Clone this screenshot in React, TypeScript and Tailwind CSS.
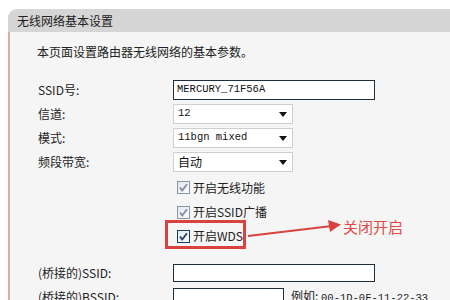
import React from 'react';

const cjk = { fontFamily: '"Noto Sans CJK SC", "Noto Sans", sans-serif' };
const mono = { fontFamily: '"Liberation Mono", "Noto Sans CJK SC", monospace' };

function Checkbox({ strong }: { strong?: boolean }) {
  return (
    <svg width="13" height="13" viewBox="0 0 13 13" className="shrink-0">
      <defs>
        <linearGradient id={strong ? 'cbs' : 'cbw'} x1="0" y1="0" x2="1" y2="1">
          <stop offset="0" stopColor="#dfe6ee" />
          <stop offset="1" stopColor="#ffffff" />
        </linearGradient>
      </defs>
      <rect x="0.5" y="0.5" width="12" height="12" fill={`url(#${strong ? 'cbs' : 'cbw'})`} stroke={strong ? '#1c3c5c' : '#8a98a6'} />
      <path d="M3 6.5 L5.2 9.5 L10 3.2" fill="none" stroke={strong ? '#21406a' : '#7c8ea4'} strokeWidth="1.8" />
    </svg>
  );
}

function Select({ value, latin }: { value: string; latin?: boolean }) {
  return (
    <div className="flex h-[20px] w-[120px] items-center justify-between border border-[#cfcfcf] bg-white pl-[4px] pr-[5px]">
      {latin ? (
        <span className="text-[10.5px] text-[#111]" style={mono}>
          {value}
        </span>
      ) : (
        <span className="text-[12px] text-[#111]" style={cjk}>
          {value}
        </span>
      )}
      <svg width="8" height="5" viewBox="0 0 8 5">
        <path d="M0 0 L8 0 L4 5 Z" fill="#111" />
      </svg>
    </div>
  );
}

function Row({ label, children, className }: { label: string; children: React.ReactNode; className?: string }) {
  return (
    <div className={`flex items-center ${className ?? ''}`}>
      <div className="w-[135px] text-[12px] text-[#222]" style={cjk}>
        {label}
      </div>
      {children}
    </div>
  );
}

export default function App() {
  return (
    <div className="h-[300px] w-[450px] overflow-hidden bg-white">
      <div className="ml-[8px] mt-[9px] flex flex-col">
        <div className="flex h-[23px] items-center rounded-tl-[9px] bg-[#d5d5d5] pl-[9px] text-[12px] text-[#222]" style={cjk}>
          无线网络基本设置
        </div>
        <div className="relative h-[300px] border-l-2 border-[#d9aea3] bg-[#f5f5f5] pl-[27px]">
          <p className="mt-[12px] h-[16px] text-[12px] leading-[16px] text-[#222]" style={cjk}>
            本页面设置路由器无线网络的基本参数。
          </p>
          <div className="pl-[1px]">
            <Row label="SSID号:" className="mt-[20px] h-[20px]">
              <div className="flex h-[20px] w-[202px] items-center border border-[#1d2d3b] bg-white pl-[3px] text-[10.5px] text-[#111]" style={mono}>
                MERCURY_71F56A
              </div>
            </Row>
            <Row label="信道:" className="mt-[4px] h-[20px]">
              <Select value="12" latin />
            </Row>
            <Row label="模式:" className="mt-[4px] h-[20px]">
              <Select value="11bgn mixed" latin />
            </Row>
            <Row label="频段带宽:" className="mt-[4px] h-[20px]">
              <Select value="自动" />
            </Row>
            <div className="mt-[3px] flex flex-col pl-[139px] text-[12px] text-[#222]" style={cjk}>
              <div className="flex h-[25px] items-center gap-[3px]">
                <Checkbox />
                开启无线功能
              </div>
              <div className="flex h-[24px] items-center gap-[3px]">
                <Checkbox />
                开启SSID广播
              </div>
              <div className="relative flex h-[24px] items-center gap-[3px]">
                <Checkbox strong />
                开启WDS
                <div className="absolute left-[-12px] top-[-4px] h-[29px] w-[81px] border-[3px] border-[#d9423e]" />
              </div>
            </div>
            <Row label="(桥接的)SSID:" className="mt-[16px] h-[18px]">
              <div className="h-[18px] w-[202px] border border-[#1d2d3b] bg-white" />
            </Row>
            <Row label="(桥接的)BSSID:" className="mt-[6px] h-[18px]">
              <div className="h-[18px] w-[111px] border border-[#1d2d3b] bg-white" />
              <span className="ml-[7px] text-[12px] text-[#222]" style={cjk}>
                例如: <span style={mono} className="text-[10.5px]">00-1D-0F-11-22-33</span>
              </span>
            </Row>
          </div>
          <svg className="absolute left-[236px] top-[184px]" width="100" height="24" viewBox="0 0 100 24">
            <path d="M2 20 L86 10" stroke="#d9423e" strokeWidth="2" />
            <path d="M82 4 L95 8.5 L84 16 Z" fill="#d9423e" />
          </svg>
          <div className="absolute left-[333px] top-[184px] text-[15px] text-[#e04a46]" style={cjk}>
            关闭开启
          </div>
        </div>
      </div>
    </div>
  );
}
